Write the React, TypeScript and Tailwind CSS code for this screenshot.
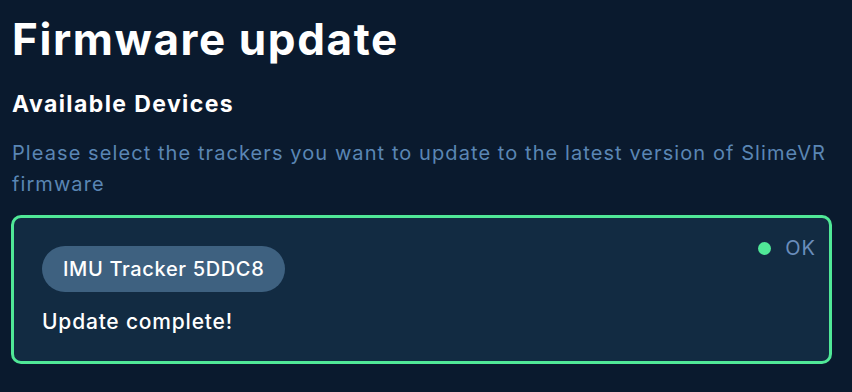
import React from "react";

export default function App() {
  return (
    <div
      className="w-[852px] h-[392px] bg-[#0a1a2e] px-3 pt-[13px] overflow-hidden"
      style={{ fontFamily: "Inter, 'Open Sans', sans-serif" }}
    >
      <h1 className="text-[44px] leading-[52px] font-bold text-white tracking-[1.6px]">Firmware update</h1>
      <h2 className="mt-[24px] text-[23px] leading-[30px] font-bold text-white tracking-[1.4px]">Available Devices</h2>
      <p className="mt-[19px] pr-[10px] text-[20px] leading-[31px] text-[#5a86b4] tracking-[1.08px]">
        Please select the trackers you want to update to the latest version of SlimeVR firmware
      </p>
      <div className="mt-[15px] -ml-[1px] mr-[8px] h-[149px] rounded-[10px] border-[3px] border-[#50e897] bg-[#122b42] flex justify-between">
        <div className="pl-[28px] pt-[28px] flex flex-col items-start">
          <div className="h-[46px] px-[21px] rounded-full bg-[#3e6180] flex items-center text-[20px] font-medium text-white tracking-[0.65px]">
            IMU Tracker 5DDC8
          </div>
          <div className="mt-[17px] text-[21px] leading-[26px] font-medium text-white tracking-[0.8px]">Update complete!</div>
        </div>
        <div className="pr-[13px] pt-[16px] flex items-start">
          <div className="flex items-center h-[28px] gap-[14px]">
            <span className="w-[13px] h-[13px] rounded-full bg-[#50e897]" />
            <span className="text-[20px] leading-[28px] text-[#6a8dbb] tracking-[1px]">OK</span>
          </div>
        </div>
      </div>
    </div>
  );
}
